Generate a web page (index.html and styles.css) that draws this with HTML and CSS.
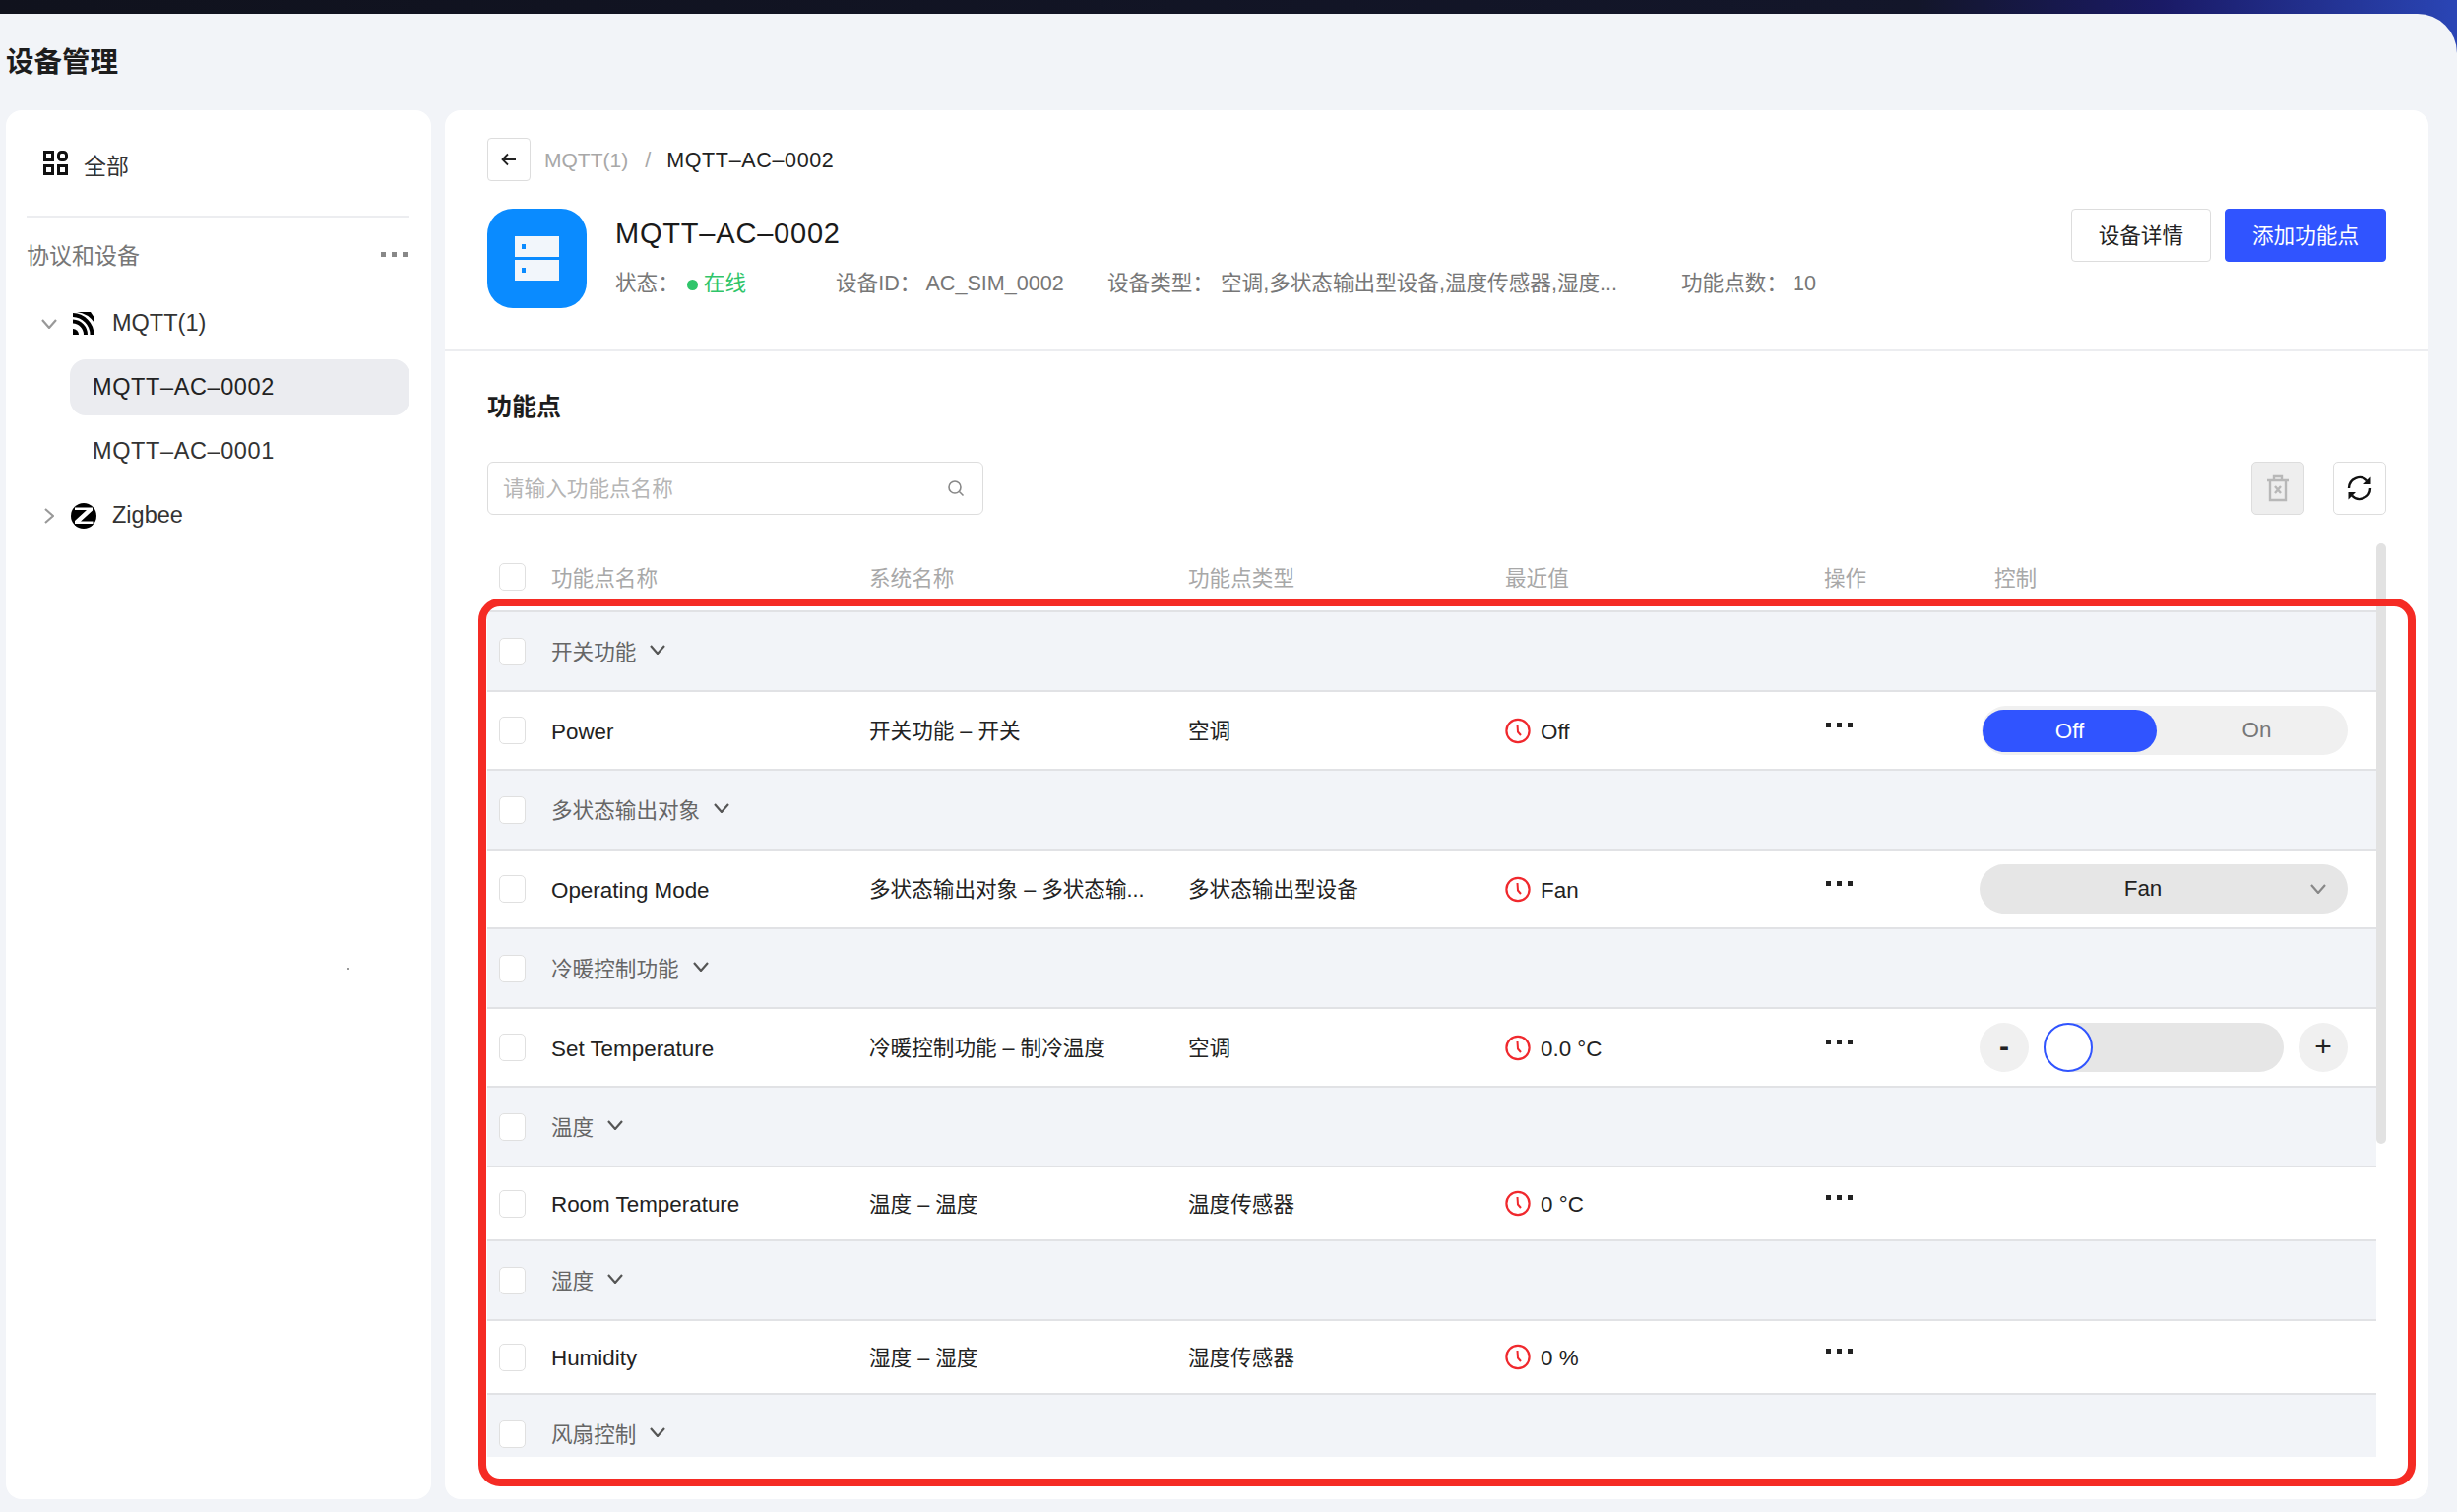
FILE: index.html
```html
<!DOCTYPE html>
<html lang="zh-CN">
<head>
    <meta charset="UTF-8">
    <meta name="viewport" content="width=device-width, initial-scale=1.0">
    <title>设备管理</title>
    <link rel="stylesheet" href="styles.css">
</head>
<body>

<svg class="icon-defs" width="0" height="0">
    <symbol id="chev-down" viewBox="0 0 16 10">
        <path d="M1 1l7 8 7-8" fill="none" stroke="currentColor" stroke-width="2.2"/>
    </symbol>
    <symbol id="clock" viewBox="0 0 26 27">
        <circle cx="13" cy="13.5" r="11.6" fill="none" stroke="currentColor" stroke-width="2.2"/>
        <path d="M12.5 7l.5 7.5 3 3.5" fill="none" stroke="currentColor" stroke-width="2"/>
    </symbol>
    <symbol id="dots" viewBox="0 0 27 5">
        <rect x="0" width="5" height="5"/><rect x="11" width="5" height="5"/><rect x="22" width="5" height="5"/>
    </symbol>
</svg>

<div class="app">
    <h1 class="page-title">设备管理</h1>

    <div class="layout">
        <!-- 左侧设备树 -->
        <aside class="sidebar">
            <div class="all-row">
                <svg class="all-icon" viewBox="0 0 25 25" fill="none" stroke="#111" stroke-width="3">
                    <rect x="1.5" y="1.5" width="8" height="8"/>
                    <rect x="15.5" y="1.5" width="8" height="8" rx="3"/>
                    <rect x="1.5" y="15.5" width="8" height="8"/>
                    <rect x="15.5" y="15.5" width="8" height="8"/>
                </svg>
                <span>全部</span>
            </div>
            <div class="side-title">
                <span>协议和设备</span>
                <svg class="side-dots"><use href="#dots"/></svg>
            </div>
            <div class="tree">
                <div class="tree-row">
                    <svg class="tree-chev"><use href="#chev-down"/></svg>
                    <svg class="proto-icon" viewBox="0 0 22 23">
                        <rect width="22" height="23" fill="#fff"/>
                        <path d="M0 17a6 6 0 0 1 6 6H0z" fill="#000"/>
                        <path d="M0 9.5A13.5 13.5 0 0 1 13 23" fill="none" stroke="#000" stroke-width="4"/>
                        <path d="M0 3a20 20 0 0 1 19.500 20" fill="none" stroke="#000" stroke-width="4"/>
                        <path d="M4 0h14l4 6v5A26 26 0 0 0 4 0z" fill="#000"/>
                    </svg>
                    <span>MQTT(1)</span>
                </div>
                <div class="tree-leaf active">MQTT–AC–0002</div>
                <div class="tree-leaf">MQTT–AC–0001</div>
                <div class="tree-row">
                    <svg class="tree-chev closed"><use href="#chev-down"/></svg>
                    <svg class="proto-icon zigbee" viewBox="0 0 26 26">
                        <circle cx="13" cy="13" r="13" fill="#000"/>
                        <path d="M4 4.500h18v3L10 18.500h12.500V21H4v-3L16 7H4z" fill="#fff"/>
                    </svg>
                    <span>Zigbee</span>
                </div>
            </div>
            <i class="speck"></i>
        </aside>

        <main class="main">
            <section class="device-head">
                <div class="crumbs">
                    <button class="back-btn" type="button">
                        <svg viewBox="0 0 16 14" width="16" height="14" fill="none" stroke="#222" stroke-width="1.8">
                            <path d="M15 7H2M7 1.500L1.500 7 7 12.500"/>
                        </svg>
                    </button>
                    <span class="crumb-link">MQTT(1)</span>
                    <span class="crumb-sep">/</span>
                    <span class="crumb-now">MQTT–AC–0002</span>
                </div>
                <div class="device-row">
                    <div class="device-icon">
                        <svg viewBox="0 0 45 45" width="45" height="45">
                            <rect y="0" width="45" height="21" fill="#f2f6fb"/>
                            <rect y="24" width="45" height="21" fill="#f2f6fb"/>
                            <rect x="7" y="8" width="4" height="5" fill="#0a8bff"/>
                            <rect x="7" y="32" width="4" height="5" fill="#0a8bff"/>
                        </svg>
                    </div>
                    <div class="device-info">
                        <div class="device-name">MQTT–AC–0002</div>
                        <div class="device-meta">
                            <span class="meta-status">状态：<i class="dot"></i><em>在线</em></span>
                            <span class="meta-id">设备ID：<b>AC_SIM_0002</b></span>
                            <span class="meta-type">设备类型：<b>空调,多状态输出型设备,温度传感器,湿度...</b></span>
                            <span class="meta-count">功能点数：<b>10</b></span>
                        </div>
                    </div>
                    <div class="device-actions">
                        <button class="btn" type="button">设备详情</button>
                        <button class="btn btn-primary" type="button">添加功能点</button>
                    </div>
                </div>
            </section>

            <section class="points">
                <h2 class="points-title">功能点</h2>
                <div class="toolbar">
                    <div class="search">
                        <span>请输入功能点名称</span>
                        <svg viewBox="0 0 18 18" width="18" height="18" fill="none" stroke="#888" stroke-width="1.6">
                            <circle cx="8" cy="8" r="6"/><path d="M12.500 12.500L16.500 16.500"/>
                        </svg>
                    </div>
                    <div class="tool-btns">
                        <button class="tool-btn disabled" type="button">
                            <svg viewBox="0 0 24 28" width="24" height="28" fill="none" stroke="#b8b8b8" stroke-width="2.400">
                                <path d="M1 6h22M8 6V2h8v4M4 6v20h16V6M9 12l6 7M15 12l-6 7"/>
                            </svg>
                        </button>
                        <button class="tool-btn" type="button">
                            <svg viewBox="0 0 26 26" width="26" height="26" fill="none" stroke="#111" stroke-width="2.400">
                                <path d="M2 13a11 11 0 0 1 19-7.500M24 13a11 11 0 0 1-19 7.500"/>
                                <path d="M24.500 1.500v7.500h-7.500zM1.500 24.500V17H9z" fill="#111" stroke="none"/>
                            </svg>
                        </button>
                    </div>
                </div>

                <div class="table-wrap">
                    <div class="grid-row table-head">
                        <span class="check"></span>
                        <span>功能点名称</span>
                        <span>系统名称</span>
                        <span>功能点类型</span>
                        <span>最近值</span>
                        <span>操作</span>
                        <span class="head-ctrl">控制</span>
                    </div>
                    <div class="table-body">
                        <div class="grid-row group">
                            <span class="check"></span>
                            <span class="group-name">开关功能<svg><use href="#chev-down"/></svg></span>
                        </div>
                        <div class="grid-row item">
                            <span class="check"></span>
                            <span class="en">Power</span>
                            <span>开关功能 – 开关</span>
                            <span>空调</span>
                            <span class="last-val"><svg><use href="#clock"/></svg>Off</span>
                            <svg class="row-dots"><use href="#dots"/></svg>
                            <div class="toggle">
                                <span class="toggle-on">Off</span>
                                <span class="toggle-off">On</span>
                            </div>
                        </div>
                        <div class="grid-row group">
                            <span class="check"></span>
                            <span class="group-name">多状态输出对象<svg><use href="#chev-down"/></svg></span>
                        </div>
                        <div class="grid-row item">
                            <span class="check"></span>
                            <span class="en">Operating Mode</span>
                            <span>多状态输出对象 – 多状态输...</span>
                            <span>多状态输出型设备</span>
                            <span class="last-val"><svg><use href="#clock"/></svg>Fan</span>
                            <svg class="row-dots"><use href="#dots"/></svg>
                            <div class="select">
                                <span>Fan</span>
                                <svg><use href="#chev-down"/></svg>
                            </div>
                        </div>
                        <div class="grid-row group">
                            <span class="check"></span>
                            <span class="group-name">冷暖控制功能<svg><use href="#chev-down"/></svg></span>
                        </div>
                        <div class="grid-row item">
                            <span class="check"></span>
                            <span class="en">Set Temperature</span>
                            <span>冷暖控制功能 – 制冷温度</span>
                            <span>空调</span>
                            <span class="last-val"><svg><use href="#clock"/></svg>0.0 °C</span>
                            <svg class="row-dots"><use href="#dots"/></svg>
                            <div class="stepper">
                                <span class="step-btn minus">-</span>
                                <div class="track"><i class="thumb"></i></div>
                                <span class="step-btn">+</span>
                            </div>
                        </div>
                        <div class="grid-row group">
                            <span class="check"></span>
                            <span class="group-name">温度<svg><use href="#chev-down"/></svg></span>
                        </div>
                        <div class="grid-row item short">
                            <span class="check"></span>
                            <span class="en">Room Temperature</span>
                            <span>温度 – 温度</span>
                            <span>温度传感器</span>
                            <span class="last-val"><svg><use href="#clock"/></svg>0 °C</span>
                            <svg class="row-dots"><use href="#dots"/></svg>
                        </div>
                        <div class="grid-row group">
                            <span class="check"></span>
                            <span class="group-name">湿度<svg><use href="#chev-down"/></svg></span>
                        </div>
                        <div class="grid-row item short">
                            <span class="check"></span>
                            <span class="en">Humidity</span>
                            <span>湿度 – 湿度</span>
                            <span>湿度传感器</span>
                            <span class="last-val"><svg><use href="#clock"/></svg>0 %</span>
                            <svg class="row-dots"><use href="#dots"/></svg>
                        </div>
                        <div class="grid-row group">
                            <span class="check"></span>
                            <span class="group-name">风扇控制<svg><use href="#chev-down"/></svg></span>
                        </div>
                    </div>
                    <i class="scrollbar"></i>
                </div>
            </section>
        </main>
    </div>

    <!-- 截图上的红色标注框 -->
    <div class="red-mark"></div>
</div>

</body>
</html>
```

FILE: styles.css
```css
* {
    box-sizing: border-box;
}
html, body {
    margin: 0;
    height: 100%;
}
body {
    font-family: "Liberation Sans", "Noto Sans CJK SC", sans-serif;
    font-size: 21.6px;
    color: #222;
    overflow: hidden;
    background: linear-gradient(90deg, #10121d 0%, #13162a 78%, #1a1a66 88%, #2a45b5 100%);
}
button {
    font-family: inherit;
    cursor: pointer;
}
.icon-defs {
    position: absolute;
}
.app {
    position: relative;
    margin-top: 14px;
    height: 1522px;
    padding: 0 29px 13px 6px;
    display: flex;
    flex-direction: column;
    background-color: #f2f4f8;
    border-top-right-radius: 40px;
}
.page-title {
    margin: 0;
    height: 98px;
    line-height: 98px;
    font-size: 28.5px;
    font-weight: 700;
    color: #1d1d1d;
}
.layout {
    flex: 1;
    display: flex;
    gap: 14px;
    min-height: 0;
}

/* sidebar */
.sidebar {
    position: relative;
    width: 432px;
    padding: 0 22px 0 21px;
    background-color: #fff;
    border-radius: 16px;
    font-size: 23px;
}
.all-row {
    height: 109px;
    padding-left: 17px;
    display: flex;
    align-items: center;
    gap: 16px;
    border-bottom: 2px solid #ecedf0;
    color: #333;
}
.all-row span {
    padding-top: 2px;
}
.all-icon {
    width: 25px;
    height: 25px;
}
.side-title {
    height: 79px;
    padding: 0 2px 5px 0;
    display: flex;
    align-items: center;
    justify-content: space-between;
    color: #777;
}
.side-dots {
    width: 27px;
    height: 5px;
    fill: #888;
}
.tree {
    display: flex;
    flex-direction: column;
    gap: 8px;
}
.tree-row {
    height: 57px;
    display: flex;
    align-items: center;
    font-size: 23.5px;
    color: #333;
}
.tree-chev {
    width: 16px;
    height: 10px;
    margin: 0 16px 0 15px;
    color: #999;
}
.tree-chev.closed {
    transform: rotate(-90deg);
}
.proto-icon {
    width: 22px;
    height: 23px;
    margin-right: 18px;
}
.proto-icon.zigbee {
    width: 26px;
    height: 26px;
    margin-left: -2px;
    margin-right: 16px;
}
.tree-leaf {
    height: 57px;
    margin-left: 44px;
    padding-left: 23px;
    line-height: 57px;
    font-size: 23.5px;
    letter-spacing: 0.6px;
    color: #333;
    border-radius: 16px;
}
.tree-leaf.active {
    background-color: #ebecf0;
    color: #222;
}
.speck {
    position: absolute;
    left: 347px;
    top: 871px;
    width: 2px;
    height: 2px;
    background-color: #999;
}

/* main */
.main {
    flex: 1;
    min-width: 0;
    display: flex;
    flex-direction: column;
    background-color: #fff;
    border-radius: 16px;
}
.device-head {
    height: 245px;
    padding: 28px 43px 0;
    border-bottom: 2px solid #ecedf0;
}
.crumbs {
    height: 44px;
    display: flex;
    align-items: center;
}
.back-btn {
    width: 44px;
    height: 44px;
    margin-right: 14px;
    padding: 0;
    display: flex;
    align-items: center;
    justify-content: center;
    background: #fff;
    border: 1px solid #ddd;
    border-radius: 4px;
}
.crumb-link {
    padding-top: 2px;
    color: #a8a8a8;
    font-size: 21px;
}
.crumb-sep {
    padding-top: 2px;
    margin: 0 16px 0 17px;
    color: #a8a8a8;
}
.crumb-now {
    padding-top: 2px;
    color: #222;
    font-size: 21.5px;
    letter-spacing: 0.65px;
}
.device-row {
    margin-top: 28px;
    display: flex;
}
.device-icon {
    width: 101px;
    height: 101px;
    margin-right: 29px;
    display: flex;
    align-items: center;
    justify-content: center;
    background-color: #0a8bff;
    border-radius: 26px;
}
.device-info {
    flex: 1;
    min-width: 0;
}
.device-name {
    height: 50px;
    line-height: 50px;
    font-size: 29px;
    letter-spacing: 0.8px;
    color: #1a1a1a;
}
.device-meta {
    position: relative;
    height: 40px;
    margin-top: 6px;
    line-height: 40px;
    color: #777;
}
.device-meta > span {
    position: absolute;
    top: 0;
    white-space: nowrap;
}
.device-meta b {
    font-weight: 400;
    margin-left: 5px;
}
.device-meta .meta-type b {
    margin-left: 7px;
}
.device-meta em {
    font-style: normal;
    color: #2fc56a;
}
.meta-status { left: 0; }
.meta-id { left: 224px; }
.meta-type { left: 500px; }
.meta-count { left: 1083px; }
.dot {
    display: inline-block;
    width: 11px;
    height: 11px;
    margin: 0 6px 0 8px;
    border-radius: 50%;
    background-color: #2fc56a;
}
.device-actions {
    display: flex;
    gap: 14px;
}
.btn {
    height: 54px;
    padding: 0 27px 3px;
    font-size: 21.6px;
    color: #222;
    background: #fff;
    border: 1px solid #ddd;
    border-radius: 4px;
}
.btn-primary {
    color: #fff;
    background-color: #3054ff;
    border-color: #3054ff;
}

/* function points */
.points {
    flex: 1;
    min-height: 0;
    padding: 0 43px;
}
.points-title {
    margin: 31px 0;
    height: 50px;
    line-height: 50px;
    font-size: 25px;
    font-weight: 700;
    color: #1d1d1d;
}
.toolbar {
    display: flex;
    justify-content: space-between;
}
.search {
    width: 504px;
    height: 54px;
    padding: 0 18px 0 15px;
    display: flex;
    align-items: center;
    justify-content: space-between;
    color: #b5b5b5;
    border: 1px solid #ddd;
    border-radius: 6px;
}
.search span {
    padding-bottom: 3px;
}
.tool-btns {
    display: flex;
    gap: 29px;
}
.tool-btn {
    width: 54px;
    height: 54px;
    padding: 0;
    display: flex;
    align-items: center;
    justify-content: center;
    background: #fff;
    border: 1px solid #ddd;
    border-radius: 5px;
}
.tool-btn.disabled {
    background-color: #eee;
}
.table-wrap {
    position: relative;
    margin-top: 29px;
}
.grid-row {
    width: 1919px;
    display: grid;
    grid-template-columns: 65px 323px 324px 322px 324px 158px 374px;
    align-items: center;
    border-bottom: 2px solid #e1e2e5;
}
.grid-row > span {
    white-space: nowrap;
}
.table-head {
    height: 70px;
    padding-bottom: 1px;
    color: #a8a8a8;
}
.table-head > span {
    padding-bottom: 1px;
}
.head-ctrl {
    padding-left: 15px;
}
.table-body {
    height: 858px;
    overflow: hidden;
}
.check {
    width: 27px;
    height: 28px;
    margin-left: 12px;
    background-color: #fff;
    border: 1px solid #e0e0e0;
    border-radius: 5px;
}
.group {
    height: 81px;
    background-color: #f2f4f8;
}
.group-name {
    grid-column: 2 / -1;
    padding-bottom: 3px;
    display: flex;
    align-items: center;
    color: #666;
}
.group-name svg {
    width: 16px;
    height: 10px;
    margin-left: 14px;
    color: #555;
}
.item {
    height: 80px;
    background-color: #fff;
}
.item > span {
    padding-bottom: 3px;
}
.item.short {
    height: 75px;
}
.item > .en {
    padding: 3px 0 0;
    font-size: 22.4px;
}
.item > .last-val {
    padding: 3px 0 0;
    display: flex;
    align-items: center;
    gap: 10px;
    font-size: 22.4px;
}
.last-val svg {
    width: 26px;
    height: 27px;
    margin-bottom: 3px;
    color: #f0282d;
}
.row-dots {
    width: 27px;
    height: 5px;
    margin: 0 0 12px 2px;
    fill: #222;
}
.toggle {
    width: 372px;
    height: 50px;
    margin-left: 2px;
    padding: 3px 3px 3px 1px;
    display: flex;
    align-items: center;
    font-size: 22.4px;
    background-color: #f0f0f0;
    border-radius: 25px;
}
.toggle-on {
    width: 177px;
    height: 43px;
    line-height: 43px;
    text-align: center;
    color: #fff;
    background-color: #3054ff;
    border-radius: 22px;
}
.toggle-off {
    flex: 1;
    padding-left: 12px;
    text-align: center;
    color: #777;
}
.select {
    height: 50px;
    padding: 0 22px 0 0;
    display: flex;
    align-items: center;
    font-size: 22.4px;
    background-color: #e6e6e6;
    border-radius: 25px;
}
.select span {
    flex: 1;
    margin-right: 4px;
    text-align: center;
}
.select svg {
    width: 16px;
    height: 10px;
    color: #888;
}
.stepper {
    height: 50px;
    display: flex;
    align-items: center;
    gap: 15px;
}
.step-btn {
    width: 50px;
    height: 50px;
    line-height: 48px;
    text-align: center;
    font-size: 30px;
    color: #222;
    background-color: #f0f0f0;
    border-radius: 50%;
}
.step-btn.minus {
    font-weight: 700;
}
.track {
    flex: 1;
    height: 50px;
    background-color: #e6e6e6;
    border-radius: 25px;
}
.thumb {
    display: block;
    width: 50px;
    height: 50px;
    background-color: #fff;
    border: 2px solid #3054ff;
    border-radius: 50%;
}
.scrollbar {
    position: absolute;
    top: 0;
    right: 0;
    width: 10px;
    height: 610px;
    background-color: #e2e2e2;
    border-radius: 5px;
}

/* annotation over the screenshot */
.red-mark {
    position: absolute;
    left: 486px;
    top: 594px;
    width: 1968px;
    height: 902px;
    border: 8px solid #f52b24;
    border-radius: 22px;
    pointer-events: none;
}
```
